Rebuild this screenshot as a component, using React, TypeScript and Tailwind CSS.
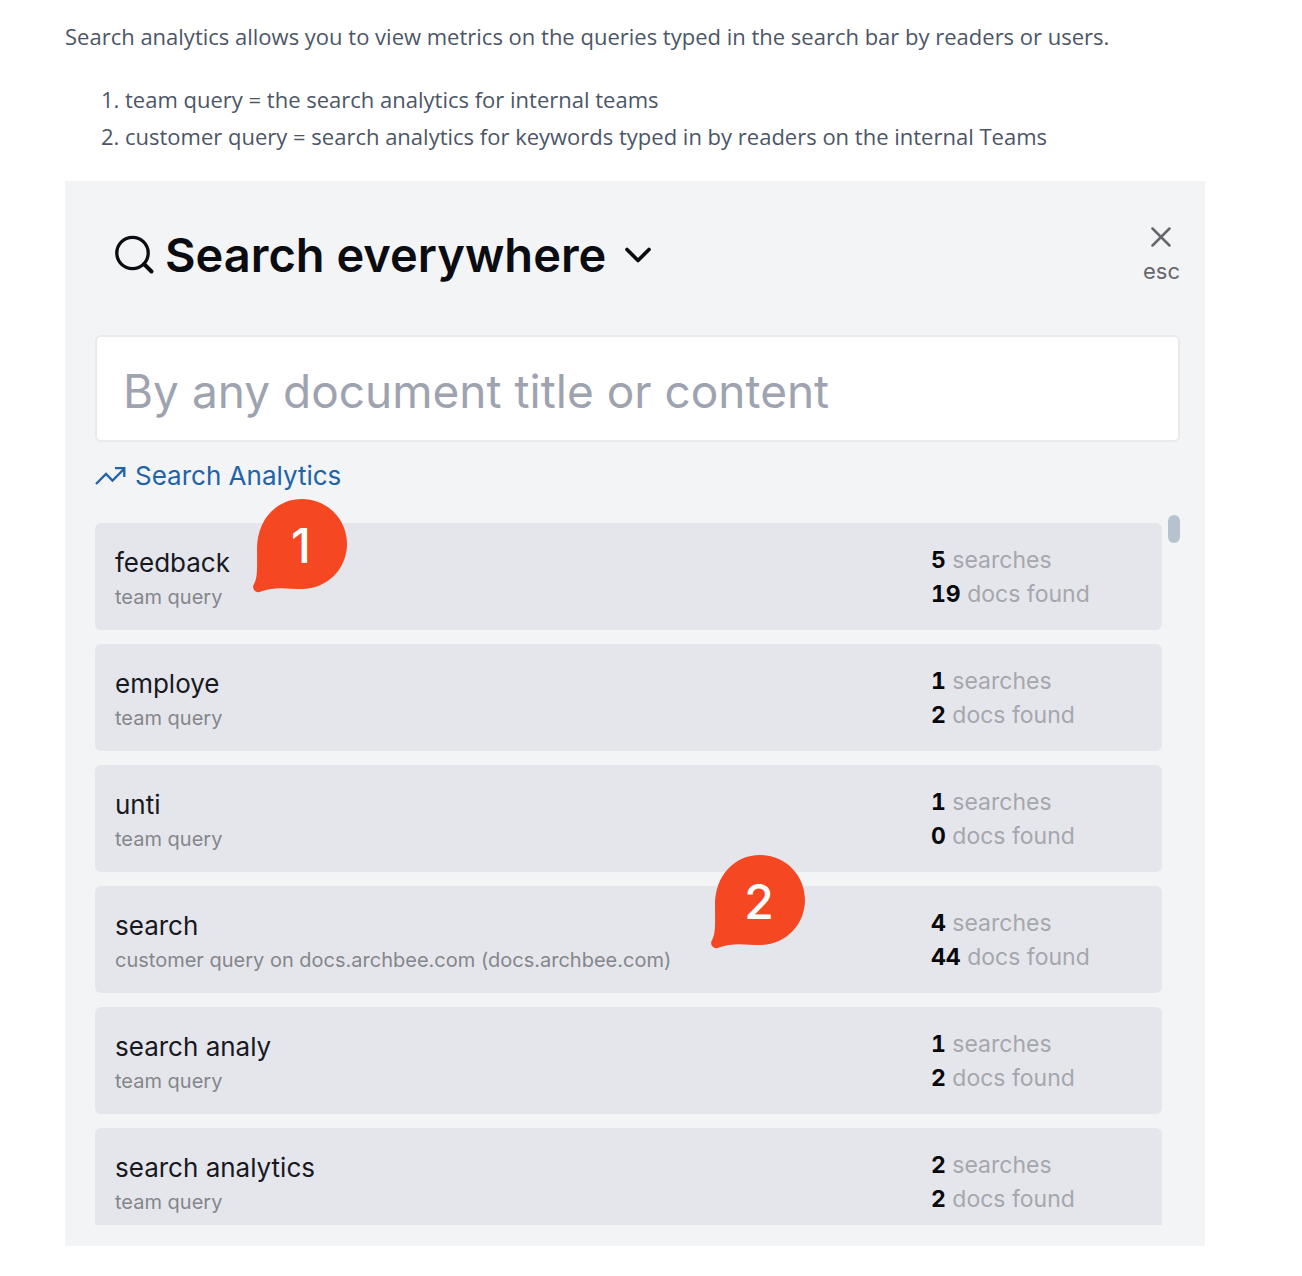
import { ChevronDown } from "lucide-react";

type Query = {
  term: string;
  source: string;
  searches: number;
  docs: number;
};

const queries: Query[] = [
  { term: "feedback", source: "team query", searches: 5, docs: 19 },
  { term: "employe", source: "team query", searches: 1, docs: 2 },
  { term: "unti", source: "team query", searches: 1, docs: 0 },
  {
    term: "search",
    source: "customer query on docs.archbee.com (docs.archbee.com)",
    searches: 4,
    docs: 44,
  },
  { term: "search analy", source: "team query", searches: 1, docs: 2 },
  { term: "search analytics", source: "team query", searches: 2, docs: 2 },
];

function Marker({ label, className }: { label: string; className: string }) {
  return (
    <div className={`absolute h-[94px] w-[94px] ${className}`}>
      <svg viewBox="0 0 94 94" className="absolute inset-0 h-full w-full" aria-hidden="true">
        <path
          d="M49 0C74 0 94 20 94 45C94 70 74 90 49 90C36 90 22 87 8 92.500C3 95 -2 90 1 85C5 78 4 66 4 50C4 20 24 0 49 0Z"
          fill="#f54822"
        />
      </svg>
      <span className="relative flex h-[94px] items-center justify-center pl-0.5 text-5xl font-medium text-white">
        {label}
      </span>
    </div>
  );
}

function QueryRow({ query }: { query: Query }) {
  return (
    <li className="flex h-[107px] shrink-0 items-center justify-between rounded-md bg-[#e5e6eb] pl-5">
      <div className="pt-1">
        <p className="text-[26px] leading-9 text-[#17191f]">{query.term}</p>
        <p className="text-xl leading-8 text-[#84868b]">{query.source}</p>
      </div>
      <div className="w-[231px] shrink-0 text-[23px] leading-[34px] text-[#a5a7ae]">
        <p>
          <strong className="font-bold text-[#08090d] tabular-nums">{query.searches}</strong> searches
        </p>
        <p>
          <strong className="font-bold text-[#08090d] tabular-nums">{query.docs}</strong> docs found
        </p>
      </div>
    </li>
  );
}

export default function App() {
  return (
    <main className="bg-white pt-[18px] pr-[97px] pb-[30px] pl-[65px] font-['Open_Sans','Noto_Sans',sans-serif] text-[#4c5667]">
      <p className="text-[22px] leading-[37px]">
        Search analytics allows you to view metrics on the queries typed in the search bar by
        readers or users.
      </p>
      <ol className="mt-[26px] list-decimal pl-[60px] text-[22px] leading-[37px]">
        <li>team query = the search analytics for internal teams</li>
        <li>
          customer query = search analytics for keywords typed in by readers on the internal Teams
        </li>
      </ol>

      <section className="relative mt-[26px] bg-[#f3f4f6] pt-[42px] pr-[25px] pb-[21px] pl-[30px] font-['Inter',sans-serif]">
        <header className="flex items-start justify-between pl-5">
          <button type="button" className="flex items-center gap-2.5 text-[#0b0c11]">
            <svg viewBox="0 0 40 40" fill="none" stroke="currentColor" className="h-10 w-10" aria-hidden="true">
              <circle cx="17.500" cy="18" r="15.700" strokeWidth="3.300" />
              <path d="M29 29L36.500 36.500" strokeWidth="4" strokeLinecap="round" />
            </svg>
            <span className="text-[47px] leading-[64px] font-semibold">Search everywhere</span>
            <ChevronDown className="h-11 w-11" strokeWidth={2} aria-hidden="true" />
          </button>
          <button type="button" className="flex flex-col items-center gap-2.5 text-[#65676d]">
            <svg viewBox="0 0 20 20" fill="none" stroke="currentColor" strokeWidth="2.500" strokeLinecap="round" className="mt-1 h-5 w-5" aria-hidden="true">
              <path d="M1.500 1.500L18.500 18.500M18.500 1.500L1.500 18.500" />
            </svg>
            <span className="text-[22px] leading-7">esc</span>
          </button>
        </header>

        <input
          type="text"
          aria-label="Search documents"
          placeholder="By any document title or content"
          className="mt-12 block h-[107px] w-full rounded-md border-2 border-[#e9eaed] bg-white px-[26px] pt-1 text-[46px] text-[#0b0c11] outline-none placeholder:text-[#9ea3af]"
        />

        <a href="#analytics" className="mt-4 inline-flex items-center gap-2 text-[26px] leading-9 text-[#2163a9]">
          <svg viewBox="0 0 32 20" fill="none" stroke="currentColor" strokeWidth="2.300" className="h-5 w-8" aria-hidden="true">
            <path d="M1 18L11 8L17.500 14.500L29 3M20 2.200H29.300V11" />
          </svg>
          Search Analytics
        </a>

        <div className="mt-[21px] flex items-start justify-between">
          <ul className="mt-2 flex h-[702px] w-full flex-col gap-3.5 overflow-hidden">
            {queries.map((query) => (
              <QueryRow key={query.term} query={query} />
            ))}
          </ul>
          <div className="ml-1.5 h-7 w-3 shrink-0 rounded-full bg-[#b6c3cf]" />
        </div>

        <Marker label="1" className="top-[318px] left-[188px]" />
        <Marker label="2" className="top-[674px] left-[646px]" />
      </section>
    </main>
  );
}
